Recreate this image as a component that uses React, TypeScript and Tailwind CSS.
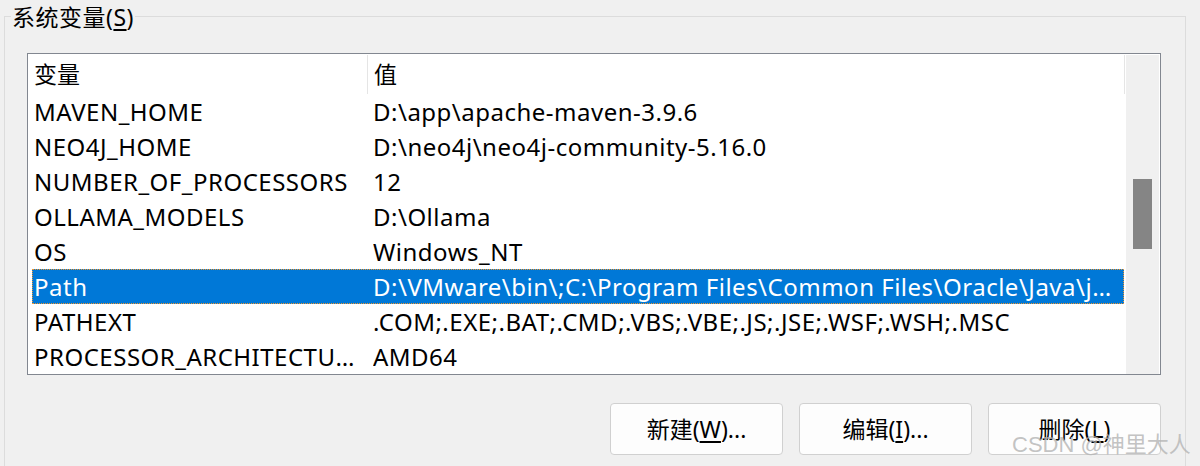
const rows: [string, string][] = [
  ["MAVEN_HOME", "D:\\app\\apache-maven-3.9.6"],
  ["NEO4J_HOME", "D:\\neo4j\\neo4j-community-5.16.0"],
  ["NUMBER_OF_PROCESSORS", "12"],
  ["OLLAMA_MODELS", "D:\\Ollama"],
  ["OS", "Windows_NT"],
  ["Path", "D:\\VMware\\bin\\;C:\\Program Files\\Common Files\\Oracle\\Java\\javapath;C:\\Windows\\system32"],
  ["PATHEXT", ".COM;.EXE;.BAT;.CMD;.VBS;.VBE;.JS;.JSE;.WSF;.WSH;.MSC"],
  ["PROCESSOR_ARCHITECTURE", "AMD64"],
];

const font = "font-['Noto_Sans','Noto_Sans_CJK_SC',sans-serif]";

const Btn = ({ label, mnemonic, tail }: { label: string; mnemonic: string; tail: string }) => (
  <button
    type="button"
    className="flex h-[52px] w-[173px] items-center justify-center rounded-[4px] border border-[#d0d0d0] bg-[#fdfdfd] text-[23px] text-black"
  >
    <span>
      {label}(<span className="underline underline-offset-[3px]">{mnemonic}</span>){tail}
    </span>
  </button>
);

export default function App() {
  return (
    <div className={`relative h-[466px] w-[1200px] overflow-hidden bg-[#f0f0f0] ${font}`}>
      {/* group box */}
      <div className="relative ml-[4px] mt-[16px] h-[460px] w-[1182px] border-l border-r border-t border-[#dcdcdc]">
        <div className="absolute left-[6px] top-[-13px] bg-[#f0f0f0] px-[1px] text-[23px] leading-[26px] tracking-[0.5px] text-black">
          系统变量(<span className="underline underline-offset-[3px]">S</span>)
        </div>

        <div className="ml-[22px] mt-[36px] flex w-[1134px] flex-col">
          {/* list view */}
          <div className="flex h-[322px] border border-[#828790] bg-white pr-[1px] pt-[1px]">
            <div className="flex w-[1097px] flex-col overflow-hidden">
              <div className="flex h-[39px] items-center text-[23px] text-black">
                <div className="flex h-full w-[340px] items-center border-r border-[#e5e5e5] pl-[6px]">变量</div>
                <div className="flex h-full flex-1 items-center border-r border-[#e5e5e5] pl-[6px]">值</div>
              </div>
              {rows.map(([k, v]) => {
                const sel = k === "Path";
                return (
                  <div
                    key={k}
                    className={`ml-[4px] flex h-[35px] w-[1092px] shrink-0 items-center text-[24px] tracking-[0.5px] ${
                      sel
                        ? "border border-dotted border-[#f0962e] bg-[#0078d7] text-white"
                        : "border border-transparent text-black"
                    }`}
                  >
                    <div className="w-[340px] shrink-0 truncate pl-[1px] pr-[14px]">{k}</div>
                    <div className="min-w-0 flex-1 truncate pr-[2px]">{v}</div>
                  </div>
                );
              })}
            </div>
            {/* scrollbar */}
            <div className="ml-[1px] w-[33px] bg-[#f0f0f0] pl-[7px] pt-[124px]">
              <div className="h-[70px] w-[19px] bg-[#858585]" />
            </div>
          </div>

          <div className="mt-[28px] flex justify-end gap-[16px]">
            <Btn label="新建" mnemonic="W" tail="..." />
            <Btn label="编辑" mnemonic="I" tail="..." />
            <Btn label="删除" mnemonic="L" tail="" />
          </div>
        </div>
      </div>

      <div className="pointer-events-none absolute left-[1012px] top-[431px] text-[22px] leading-[28px] text-[#b4b4b4]/80 font-['Liberation_Sans','Noto_Sans_CJK_SC',sans-serif]">
        CSDN @神里大人
      </div>
    </div>
  );
}
